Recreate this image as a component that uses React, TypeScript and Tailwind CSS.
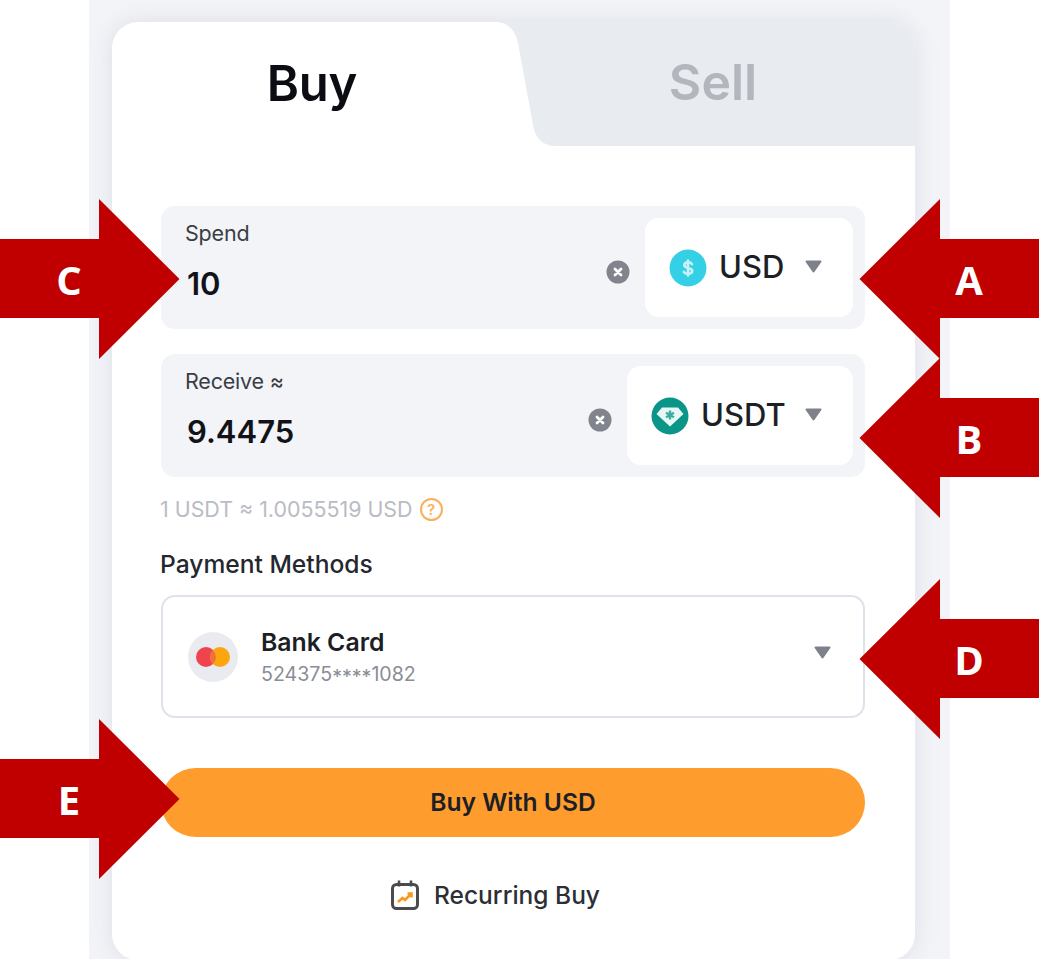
import type { ReactNode } from "react";

const font = { fontFamily: "Inter, 'Liberation Sans', sans-serif" };

function Caret() {
  return (
    <svg width="17" height="13" viewBox="0 0 17 13" className="shrink-0">
      <path d="M1.500 1.500h14L8.500 11.500z" fill="#7e8189" stroke="#7e8189" strokeWidth="2" strokeLinejoin="round" />
    </svg>
  );
}

function ClearIcon() {
  return (
    <svg width="24" height="24" viewBox="0 0 24 24" className="shrink-0">
      <circle cx="12" cy="12" r="11.500" fill="#81848c" />
      <path d="M9 9l6 6M15 9l-6 6" stroke="#fff" strokeWidth="2.800" strokeLinecap="round" />
    </svg>
  );
}

function UsdIcon() {
  return (
    <svg width="38" height="38" viewBox="0 0 38 38" className="shrink-0">
      <circle cx="19" cy="19" r="18.500" fill="#33d0e6" />
      <path d="M23 15.200c-.7-1.200-2.200-1.800-4-1.800-2.300 0-3.800 1-3.800 2.700 0 3.700 8 2.100 8 5.800 0 1.800-1.700 2.800-4.200 2.800-2 0-3.500-.7-4.200-1.900M19 11.500v15" fill="none" stroke="#c9f2f8" strokeWidth="2.600" strokeLinecap="round" />
    </svg>
  );
}

function UsdtIcon() {
  return (
    <svg width="38" height="38" viewBox="0 0 38 38" className="shrink-0">
      <circle cx="19" cy="19" r="18.500" fill="#0b9488" />
      <path d="M11 10.500h16l5.500 6.500L19 29.500 5.500 17z" fill="#e8f7f5" />
      <path d="M19 13.500v9M15 15.800l8 4.400M23 15.800l-8 4.400" stroke="#3aaea3" strokeWidth="2.400" />
    </svg>
  );
}

function CardLogo() {
  return (
    <div className="flex h-[50px] w-[50px] shrink-0 items-center justify-center rounded-full bg-[#e9ebf0]">
      <svg width="36" height="22" viewBox="0 0 36 22">
        <circle cx="11" cy="11" r="10" fill="#ef4350" />
        <circle cx="25" cy="11" r="10" fill="#fba60f" />
        <path d="M18 3.900a10 10 0 0 1 0 14.200 10 10 0 0 1 0-14.200z" fill="#f0703a" />
      </svg>
    </div>
  );
}

function CalendarIcon() {
  return (
    <svg width="28" height="30" viewBox="0 0 28 30" className="shrink-0">
      <rect x="1.500" y="4.500" width="25" height="24" rx="4" fill="none" stroke="#4b4b4f" strokeWidth="3" />
      <path d="M8 0.500v6M20 0.500v6" stroke="#4b4b4f" strokeWidth="2.600" />
      <path d="M7 22l4.500-4 2.500 2 6-6M16.500 13.500h4v4" fill="none" stroke="#f79a1d" strokeWidth="2.600" />
    </svg>
  );
}

function Field({
  label,
  value,
  pickerWidth,
  icon,
  currency,
}: {
  label: string;
  value: string;
  pickerWidth: string;
  icon: ReactNode;
  currency: string;
}) {
  return (
    <div className="flex h-[123px] items-center rounded-[14px] bg-[#f3f4f7] pr-3 pl-6">
      <div className="flex-1 pb-[12px]">
        <div className="text-[21.500px] leading-[26px] tracking-[-0.2px] text-[#3a3d44]">{label}</div>
        <div className="mt-[18px] pl-[2px] text-[31px] leading-[40px] font-semibold text-[#111318]">{value}</div>
      </div>
      <div className="mt-[8px] mr-[15px]">
        <ClearIcon />
      </div>
      <div className={`flex h-[99px] items-center rounded-[14px] bg-white pl-[24px] ${pickerWidth}`}>
        {icon}
        <span className="ml-[12px] text-[31px] font-medium text-[#1c1f26]">{currency}</span>
        <span className="mr-[31px] mb-[2px] ml-auto">
          <Caret />
        </span>
      </div>
    </div>
  );
}

function Arrow({ side, top, letter }: { side: "left" | "right"; top: string; letter: string }) {
  return (
    <div className={`absolute h-[160px] w-[180px] ${top} ${side === "left" ? "left-0" : "right-0"}`}>
      <svg width="180" height="160" viewBox="0 0 180 160" className={`absolute inset-0 ${side === "right" ? "-scale-x-100" : ""}`}>
        <polygon points="0,40 99,40 99,0 179.500,80 99,160 99,119 0,119" fill="#c00000" />
      </svg>
      <span
        className={`absolute top-[57px] w-[40px] text-center text-[40px] leading-[48px] font-bold text-white ${side === "left" ? "left-[49px]" : "right-[50px]"}`}
        style={{ fontFamily: "'Open Sans', sans-serif" }}
      >
        {letter}
      </span>
    </div>
  );
}

export default function App() {
  return (
    <main className="relative h-[959px] w-[1039px] overflow-hidden bg-white" style={font}>
      <div className="ml-[89px] h-full w-[861px] bg-[#f3f4f8] px-[23px] pt-[22px]">
        <div className="h-[938px] w-[803px] overflow-hidden rounded-[26px] bg-white shadow-[0_0_22px_rgba(210,214,224,0.7)]">
          <div className="flex h-[124px]">
            <div className="flex w-[383px] items-center justify-center pl-[17px] text-[49px] font-semibold tracking-[-0.2px] text-[#0b0d12]">
              Buy
            </div>
            <div className="relative flex flex-1 items-center justify-center pb-[3px] text-[50px] font-semibold text-[#b3b6bc]">
              <svg viewBox="0 0 420 124" className="absolute inset-0 h-full w-full" preserveAspectRatio="none">
                <path d="M0 0H420V124H60C48 124 40 116 38 103L23 21C20 7 12 0 0 0Z" fill="#e8ebf0" />
              </svg>
              <span className="relative ml-[16px]">Sell</span>
            </div>
          </div>
          <div className="pt-[60px] pr-[50px] pl-[49px]">
            <Field label="Spend" value="10" pickerWidth="w-[208px]" icon={<UsdIcon />} currency="USD" />
            <div className="h-[25px]" />
            <Field label="Receive ≈" value="9.4475" pickerWidth="w-[226px]" icon={<UsdtIcon />} currency="USDT" />
            <div className="mt-[18px] -ml-[1px] flex items-center gap-[7px] text-[21.400px] leading-[28px] text-[#b9bcc4]">
              1 USDT ≈ 1.0055519 USD
              <span className="flex h-[23px] w-[23px] items-center justify-center rounded-full border-2 border-[#fbae5c] text-[15px] leading-none font-semibold text-[#fbae5c]">?</span>
            </div>
            <div className="mt-[26px] -ml-[1px] text-[24.600px] leading-[30px] font-medium text-[#24272e]">Payment Methods</div>
            <div className="mt-[16px] flex h-[123px] items-center rounded-[14px] border-2 border-[#dfe2ea] pr-[32px] pl-[25px]">
              <CardLogo />
              <div className="ml-[23px] flex-1">
                <div className="text-[24.800px] leading-[30px] font-semibold text-[#1c1f26]">Bank Card</div>
                <div className="mt-[4px] text-[19.600px] leading-[26px] text-[#8a8d95]">
                  524375<span className="inline-block translate-y-[3px]">****</span>1082
                </div>
              </div>
              <span className="mb-[8px]">
                <Caret />
              </span>
            </div>
            <button className="mt-[50px] flex h-[69px] w-full items-center justify-center rounded-full bg-[#ff9c2e] text-[24.600px] font-semibold text-[#1c1f26]">
              Buy With USD
            </button>
            <div className="mt-[42px] mr-[35px] flex items-center justify-center gap-[15px] text-[24.500px] leading-[32px] font-medium text-[#2c2f36]">
              <CalendarIcon />
              Recurring Buy
            </div>
          </div>
        </div>
      </div>
      <Arrow side="right" top="top-[199px]" letter="A" />
      <Arrow side="right" top="top-[358px]" letter="B" />
      <Arrow side="left" top="top-[199px]" letter="C" />
      <Arrow side="right" top="top-[579px]" letter="D" />
      <Arrow side="left" top="top-[719px]" letter="E" />
    </main>
  );
}
